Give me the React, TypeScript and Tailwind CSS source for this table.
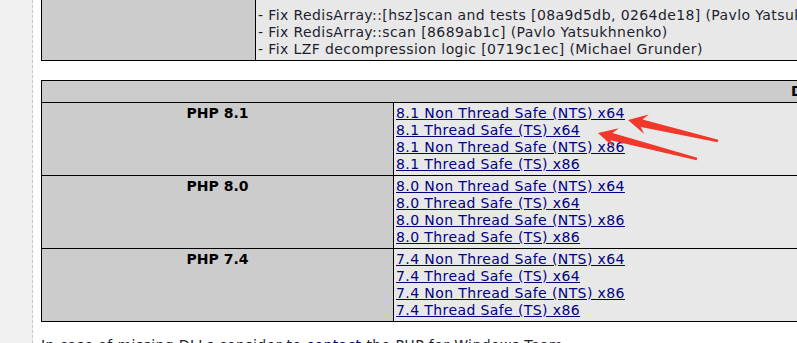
import React from "react";

type Release = { version: string; links: string[] };

const releases: Release[] = [
  {
    version: "8.1",
    links: [
      "8.1 Non Thread Safe (NTS) x64",
      "8.1 Thread Safe (TS) x64",
      "8.1 Non Thread Safe (NTS) x86",
      "8.1 Thread Safe (TS) x86",
    ],
  },
  {
    version: "8.0",
    links: [
      "8.0 Non Thread Safe (NTS) x64",
      "8.0 Thread Safe (TS) x64",
      "8.0 Non Thread Safe (NTS) x86",
      "8.0 Thread Safe (TS) x86",
    ],
  },
  {
    version: "7.4",
    links: [
      "7.4 Non Thread Safe (NTS) x64",
      "7.4 Thread Safe (TS) x64",
      "7.4 Non Thread Safe (NTS) x86",
      "7.4 Thread Safe (TS) x86",
    ],
  },
];

const changes = [
  "- Fix RedisArray::[hsz]scan and tests [08a9d5db, 0264de18] (Pavlo Yatsukhnenko)",
  "- Fix RedisArray::scan [8689ab1c] (Pavlo Yatsukhnenko)",
  "- Fix LZF decompression logic [0719c1ec] (Michael Grunder)",
];

function Arrow({ x, y, tx, ty }: { x: number; y: number; tx: number; ty: number }) {
  const dx = tx - x;
  const dy = ty - y;
  const len = Math.sqrt(dx * dx + dy * dy);
  const angle = (Math.atan2(dy, dx) * 180) / Math.PI;
  const pts = [
    [0, 0],
    [19, -10],
    [14, -3.8],
    [len, -1.2],
    [len, 1.2],
    [14, 3.8],
    [19, 10],
  ]
    .map((p) => p.join(","))
    .join(" ");
  return (
    <g transform={`translate(${x} ${y}) rotate(${angle})`}>
      <polygon points={pts} fill="#f2382b" />
    </g>
  );
}

export default function App() {
  return (
    <div
      className="relative w-[797px] h-[343px] overflow-hidden bg-white text-[14px] leading-[17px] tracking-[0.4px] text-[#1e1e2e]"
      style={{ fontFamily: '"DejaVu Sans", Verdana, sans-serif' }}
    >
      <div className="flex h-full">
        <div className="w-[33px] shrink-0 bg-[#f0f0f0] border-r border-dashed border-[#c8c8c8]" />
        <div className="pl-[8px] shrink-0">
          {/* changelog table */}
          <table className="-mt-[13px] w-[1578px] table-fixed border-collapse border border-black">
            <colgroup>
              <col className="w-[214px]" />
              <col />
            </colgroup>
            <tbody>
              <tr>
                <td className="border border-black bg-[#cccccc]" />
                <td className="border border-black bg-[#e8e8e8] px-[2px] py-[2px] align-top whitespace-nowrap">
                  <div>&nbsp;</div>
                  {changes.map((c) => (
                    <div key={c}>{c}</div>
                  ))}
                </td>
              </tr>
            </tbody>
          </table>

          {/* download table */}
          <table className="mt-[19px] w-[1578px] table-fixed border-collapse border border-black">
            <colgroup>
              <col className="w-[352px]" />
              <col />
            </colgroup>
            <thead>
              <tr>
                <th colSpan={2} className="border border-black bg-[#cccccc] py-[2px] text-center font-bold tracking-normal text-black">
                  Download
                </th>
              </tr>
            </thead>
            <tbody>
              {releases.map((r) => (
                <tr key={r.version}>
                  <th className="border border-black bg-[#cccccc] py-[2px] align-top text-center font-bold tracking-normal text-black">
                    PHP {r.version}
                  </th>
                  <td className="border border-black bg-[#e8e8e8] px-[2px] py-[2px] align-top whitespace-nowrap">
                    {r.links.map((l) => (
                      <div key={l}>
                        <a href="#" className="text-[#000080] underline">
                          {l}
                        </a>
                      </div>
                    ))}
                  </td>
                </tr>
              ))}
            </tbody>
          </table>

          <p className="mt-[15px] whitespace-nowrap">
            In case of missing DLLs consider to{" "}
            <a href="#" className="text-[#000080] underline">
              contact
            </a>{" "}
            the PHP for Windows Team.
          </p>
        </div>
      </div>

      <svg className="pointer-events-none absolute inset-0" width="797" height="343">
        <Arrow x={628} y={120} tx={718} ty={141} />
        <Arrow x={598} y={133} tx={697} ty={159} />
      </svg>
    </div>
  );
}
